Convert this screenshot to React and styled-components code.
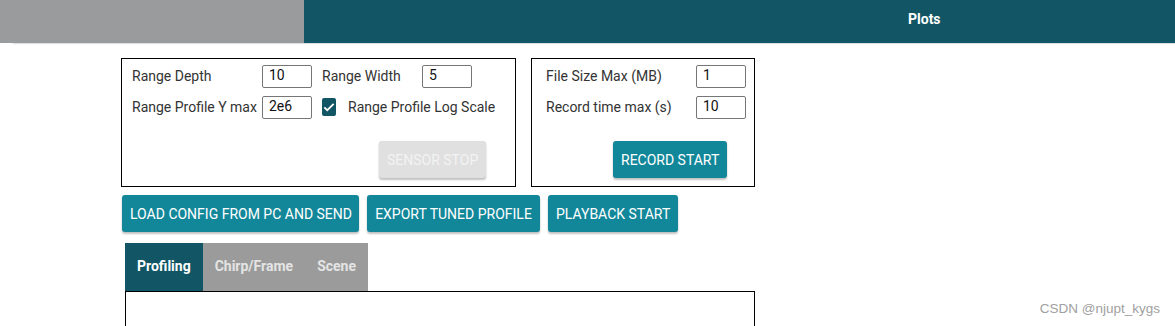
import React from "react";
import styled, { createGlobalStyle } from "styled-components";

const Global = createGlobalStyle`
  html, body { margin: 0; padding: 0; background: #fff; overflow: hidden; }
  body { font-family: Roboto, "Liberation Sans", sans-serif; color: rgba(0,0,0,0.87); }
  * { box-sizing: border-box; }
`;

const Page = styled.div`
  width: 1175px;
  height: 326px;
  position: relative;
  overflow: hidden;
`;

const Header = styled.div`
  display: flex;
  height: 43px;
  box-shadow: 13px 1px 1px rgba(0, 0, 0, 0.12);
`;

const HeaderTab = styled.div`
  display: flex;
  align-items: center;
  height: 100%;
  font-size: 14px;
  font-weight: 700;
  color: #fff;
  background: ${(p) => (p.$active ? "#125565" : "#9a9b9d")};
  width: ${(p) => (p.$width ? `${p.$width}px` : "auto")};
  flex: ${(p) => (p.$width ? "none" : "1")};
  padding-left: ${(p) => p.$pad || 0}px;
  padding-bottom: 6px;
`;

const Content = styled.div`
  padding: 15px 0 0 121px;
  display: flex;
  flex-direction: column;
`;

const BoxRow = styled.div`
  display: flex;
  gap: 15px;
`;

const Box = styled.div`
  border: 1px solid #000;
  width: ${(p) => p.$width}px;
  height: 129px;
  display: flex;
  flex-direction: column;
  padding: 5px ${(p) => p.$padRight}px 8px ${(p) => p.$padLeft}px;
`;

const FieldGrid = styled.div`
  display: grid;
  grid-template-columns: ${(p) => p.$cols};
  column-gap: 10px;
  row-gap: 7px;
  align-items: center;
`;

const Label = styled.label`
  font-size: 14px;
  line-height: 23px;
  color: #333;
  white-space: nowrap;
  padding-top: 1px;
`;

const Input = styled.input`
  width: 50px;
  height: 23px;
  border: 1px solid #767676;
  border-radius: 2px;
  font-family: Roboto, "Liberation Sans", sans-serif;
  font-size: 14px;
  color: #111;
  padding: 0 0 3px 6px;
  margin: 0;
  outline: none;
`;

const CheckWrap = styled.div`
  display: flex;
  align-items: center;
  gap: 8px;
  grid-column: span 2;
`;

const CheckBox = styled.span`
  width: 18px;
  height: 18px;
  margin-right: 4px;
  border-radius: 2px;
  background: #125565;
  display: inline-flex;
  align-items: center;
  justify-content: center;
`;

const ButtonBar = styled.div`
  margin-top: auto;
  display: flex;
  justify-content: flex-end;
  padding-right: ${(p) => p.$right}px;
`;

const Button = styled.button`
  height: 37px;
  padding: 0 ${(p) => p.$pad ?? 8}px;
  border: none;
  border-radius: 3px;
  font-family: Roboto, "Liberation Sans", sans-serif;
  font-size: 14px;
  font-weight: 400;
  text-transform: uppercase;
  white-space: nowrap;
  background: ${(p) => (p.$disabled ? "#e0e0e0" : "#13879a")};
  color: ${(p) => (p.$disabled ? "#f3f3f3" : "#fff")};
  box-shadow: 0 2px 2px rgba(0, 0, 0, 0.24), 0 0 1px rgba(0, 0, 0, 0.12);
  width: ${(p) => (p.$width ? `${p.$width}px` : "auto")};
`;

const ActionRow = styled.div`
  display: flex;
  gap: 8px;
  margin: 8px 0 0 1px;
`;

const Tabs = styled.div`
  display: flex;
  margin: 11px 0 0 4px;
  height: 48px;
`;

const Tab = styled.div`
  display: flex;
  align-items: center;
  padding: 0 12px 2px;
  font-size: 14px;
  font-weight: 700;
  background: ${(p) => (p.$active ? "#125565" : "#9b9b9b")};
  color: ${(p) => (p.$active ? "#fff" : "#e4e4e4")};
`;

const Panel = styled.div`
  margin-left: 4px;
  width: 630px;
  height: 80px;
  border: 1px solid #000;
`;

const Watermark = styled.div`
  position: absolute;
  right: 15px;
  bottom: 10px;
  font-family: "Liberation Sans", Arial, sans-serif;
  font-size: 13.5px;
  color: #a0a0a0;
`;

export default function App() {
  return (
    <Page>
      <Global />
      <Header>
        <HeaderTab $width={304} />
        <HeaderTab $active $pad={604}>Plots</HeaderTab>
      </Header>
      <Content>
        <BoxRow>
          <Box $width={395} $padLeft={10} $padRight={29}>
            <FieldGrid $cols="120px 50px 90px 50px">
              <Label>Range Depth</Label>
              <Input defaultValue="10" />
              <Label>Range Width</Label>
              <Input defaultValue="5" />
              <Label>Range Profile Y max</Label>
              <Input defaultValue="2e6" />
              <CheckWrap>
                <CheckBox>
                  <svg width="14" height="14" viewBox="0 0 24 24">
                    <path d="M4 12.5l5 5L20 6.5" fill="none" stroke="#fff" strokeWidth="3" />
                  </svg>
                </CheckBox>
                <Label>Range Profile Log Scale</Label>
              </CheckWrap>
            </FieldGrid>
            <ButtonBar $right={0}>
              <Button $disabled $width={107}>Sensor Stop</Button>
            </ButtonBar>
          </Box>
          <Box $width={224} $padLeft={14} $padRight={8}>
            <FieldGrid $cols="140px 50px">
              <Label>File Size Max (MB)</Label>
              <Input defaultValue="1" />
              <Label>Record time max (s)</Label>
              <Input defaultValue="10" />
            </FieldGrid>
            <ButtonBar $right={19}>
              <Button $width={114}>Record Start</Button>
            </ButtonBar>
          </Box>
        </BoxRow>
        <ActionRow>
          <Button $width={237}>Load config from PC and send</Button>
          <Button $width={173}>Export tuned profile</Button>
          <Button $width={130}>Playback start</Button>
        </ActionRow>
        <Tabs>
          <Tab $active>Profiling</Tab>
          <Tab>Chirp/Frame</Tab>
          <Tab>Scene</Tab>
        </Tabs>
        <Panel />
      </Content>
      <Watermark>CSDN @njupt_kygs</Watermark>
    </Page>
  );
}
